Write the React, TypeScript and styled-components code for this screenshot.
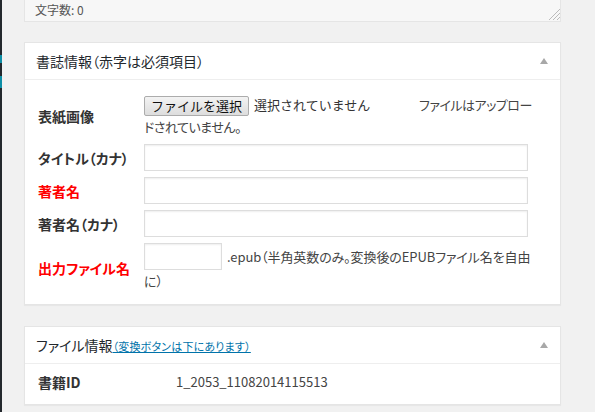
import React from "react";
import styled, { createGlobalStyle } from "styled-components";

const Global = createGlobalStyle`
  html, body { margin: 0; padding: 0; background: #f1f1f1; }
  body {
    font-family: "Noto Sans CJK JP", "Noto Sans", sans-serif;
    font-size: 13px;
    color: #444;
    font-feature-settings: "palt";
  }
`;

const Page = styled.div`
  display: flex;
  width: 595px;
  height: 412px;
  overflow: hidden;
  background: #f1f1f1;
`;

const AdminEdge = styled.div`
  width: 2px;
  flex: none;
  display: flex;
  flex-direction: column;
  background: #23282d;
`;

const EdgeSegment = styled.div<{ $h: number; $active?: boolean }>`
  height: ${(p) => p.$h}px;
  flex: none;
  background: ${(p) => (p.$active ? "#0d8ea6" : "#23282d")};
`;

const Main = styled.main`
  flex: 1;
  display: flex;
  flex-direction: column;
  padding: 0 38px 0 22px;
`;

const StatusBar = styled.div`
  flex: none;
  height: 22px;
  box-sizing: border-box;
  display: flex;
  align-items: center;
  justify-content: space-between;
  padding: 0 0 1px 10px;
  background: #f7f7f7;
  border: 1px solid #e5e5e5;
  border-top: none;
  font-size: 12px;
  color: #555;
  line-height: 16px;
`;

const ResizeGrip = styled.svg`
  align-self: flex-end;
  margin-right: -1px;
  margin-bottom: -1px;
`;

const Postbox = styled.section<{ $top: number }>`
  flex: none;
  margin-top: ${(p) => p.$top}px;
  background: #fff;
  border: 1px solid #e5e5e5;
  box-shadow: 0 1px 1px rgba(0, 0, 0, 0.04);
`;

const PostboxHeader = styled.h2`
  margin: 0;
  height: 37px;
  box-sizing: border-box;
  display: flex;
  align-items: center;
  padding: 0 12px 0 11px;
  border-bottom: 1px solid #eee;
  font-size: 14px;
  font-weight: 400;
  line-height: 20px;
  color: #23282d;
`;

const HeaderTitle = styled.span`
  flex: 1;
  display: flex;
  align-items: baseline;
`;

const HeaderLink = styled.a`
  font-size: 11px;
  color: #0073aa;
  text-decoration: underline;
  letter-spacing: 0.2px;
`;

const ToggleArrow = styled.svg`
  flex: none;
`;

const FormGrid = styled.div<{ $labelWidth: number; $pad: string }>`
  display: grid;
  grid-template-columns: ${(p) => p.$labelWidth}px 384px;
  row-gap: 6px;
  align-items: center;
  padding: ${(p) => p.$pad};
`;

const Label = styled.div<{ $required?: boolean }>`
  font-size: 14px;
  font-weight: 700;
  line-height: 22px;
  color: ${(p) => (p.$required ? "#ff0000" : "#333")};
`;

const Cell = styled.div`
  font-size: 13px;
  line-height: 22px;
  color: #444;
`;

const NoWrap = styled.span`
  white-space: nowrap;
`;

const UploadNote = styled.span`
  letter-spacing: -0.5px;
`;

const FileControl = styled.span`
  display: inline-block;
  width: 275px;
  white-space: nowrap;
  font-feature-settings: normal;
  color: #333;
`;

const FileButton = styled.button`
  height: 20px;
  box-sizing: border-box;
  padding: 0 6px;
  margin: 0 5px 0 0;
  vertical-align: middle;
  border: 1px solid #acacac;
  border-radius: 2px;
  background: linear-gradient(#f3f3f3, #dddddd);
  font-family: "Noto Sans CJK JP", sans-serif;
  font-size: 13px;
  line-height: 18px;
  color: #111;
  font-feature-settings: normal;
`;

const TextInput = styled.input<{ $width: number }>`
  display: inline-block;
  width: ${(p) => p.$width}px;
  height: 27px;
  box-sizing: border-box;
  margin: 0;
  vertical-align: middle;
  border: 1px solid #ddd;
  box-shadow: inset 0 1px 2px rgba(0, 0, 0, 0.07);
  background: #fff;
  outline: none;
`;

const InputNote = styled.span`
  margin-left: 5px;
  vertical-align: middle;
  letter-spacing: -0.1px;
`;

const Value = styled.div`
  font-size: 13px;
  line-height: 22px;
  color: #444;
`;

export default function App() {
  return (
    <>
      <Global />
      <Page>
        <AdminEdge>
          <EdgeSegment $h={55} />
          <EdgeSegment $h={8} $active />
          <EdgeSegment $h={13} />
          <EdgeSegment $h={12} $active />
        </AdminEdge>
        <Main>
          <StatusBar>
            <span>文字数: 0</span>
            <ResizeGrip width="13" height="14" viewBox="0 0 13 14">
              <path d="M1 13 L12 2 M5 13 L12 6 M9 13 L12 10" stroke="#bbb" strokeWidth="1" fill="none" />
            </ResizeGrip>
          </StatusBar>

          <Postbox $top={20}>
            <PostboxHeader>
              <HeaderTitle>書誌情報（赤字は必須項目）</HeaderTitle>
              <ToggleArrow width="8" height="6" viewBox="0 0 8 6">
                <path d="M4 0 L8 6 L0 6 Z" fill="#a8a8a8" />
              </ToggleArrow>
            </PostboxHeader>
            <FormGrid $labelWidth={106} $pad="14px 0 12px 13px">
              <Label>表紙画像</Label>
              <Cell>
                <NoWrap>
                  <FileControl>
                    <FileButton type="button">ファイルを選択</FileButton>
                    選択されていません
                  </FileControl>
                  <UploadNote>ファイルはアップロー</UploadNote>
                </NoWrap>
                <br />
                <UploadNote>ドされていません。</UploadNote>
              </Cell>

              <Label>タイトル（カナ）</Label>
              <Cell>
                <TextInput $width={384} type="text" />
              </Cell>

              <Label $required>著者名</Label>
              <Cell>
                <TextInput $width={384} type="text" />
              </Cell>

              <Label>著者名（カナ）</Label>
              <Cell>
                <TextInput $width={384} type="text" />
              </Cell>

              <Label $required>出力ファイル名</Label>
              <Cell>
                <NoWrap>
                  <TextInput $width={78} type="text" />
                  <InputNote>.epub（半角英数のみ。変換後のEPUBファイル名を自由</InputNote>
                </NoWrap>
                <br />
                に）
              </Cell>
            </FormGrid>
          </Postbox>

          <Postbox $top={21}>
            <PostboxHeader>
              <HeaderTitle>
                ファイル情報
                <HeaderLink href="#">（変換ボタンは下にあります）</HeaderLink>
              </HeaderTitle>
              <ToggleArrow width="8" height="6" viewBox="0 0 8 6">
                <path d="M4 0 L8 6 L0 6 Z" fill="#a8a8a8" />
              </ToggleArrow>
            </PostboxHeader>
            <FormGrid $labelWidth={138} $pad="7px 0 11px 13px">
              <Label>書籍ID</Label>
              <Value>1_2053_11082014115513</Value>
            </FormGrid>
          </Postbox>
        </Main>
      </Page>
    </>
  );
}
